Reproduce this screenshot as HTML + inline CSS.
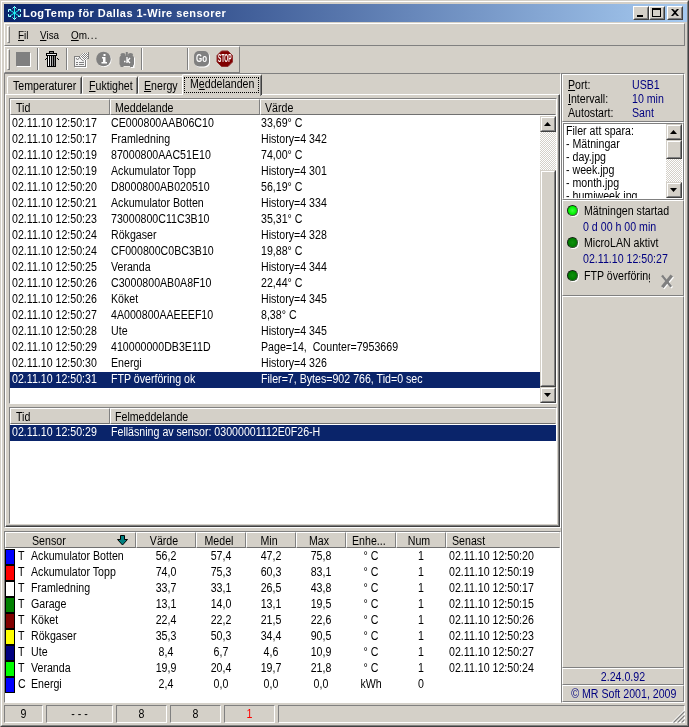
<!DOCTYPE html>
<html lang="sv"><head><meta charset="utf-8"><title>LogTemp för Dallas 1-Wire sensorer</title>
<style>
html,body{margin:0;padding:0}
body{width:689px;height:727px;overflow:hidden;background:#d4d0c8;position:relative;font-family:"Liberation Sans",Arial,sans-serif;font-size:12.5px;color:#000;line-height:16px}
div,span,i,svg{position:absolute;box-sizing:border-box}
#root{left:0;top:0;width:689px;height:727px;will-change:transform}
.t{white-space:pre;font-size:12.5px;line-height:16px;height:16px;transform:scaleX(.85);transform-origin:0 0}
.tc{text-align:center;transform-origin:50% 0}
.w{color:#fff}
.blue{color:#000080}
u{text-decoration:underline;text-underline-offset:1px;text-decoration-thickness:1px}
#frame1{left:0;top:0;width:689px;height:727px;border:1px solid;border-color:#d4d0c8 #404040 #404040 #d4d0c8}
#frame2{left:1px;top:1px;width:687px;height:725px;border:1px solid;border-color:#fff #808080 #808080 #fff}
#title{left:4px;top:4px;width:683px;height:18px;background:linear-gradient(90deg,#0a246a 0%,#a6caf0 100%)}
#title .tt{left:19px;top:3px;color:#fff;font-weight:bold;font-size:11px;line-height:13px;white-space:pre;letter-spacing:0.45px}
.tb{width:16px;height:14px;top:2px;background:#d4d0c8;border:1px solid;border-color:#fff #404040 #404040 #fff}
.tb:before{content:"";position:absolute;left:0;top:0;right:0;bottom:0;border:1px solid;border-color:#d4d0c8 #808080 #808080 #d4d0c8}
.band{border:1px solid;border-color:#fff #808080 #808080 #fff}
.grip{width:3px;border:1px solid;border-color:#fff #808080 #808080 #fff}
.menu{top:29px;white-space:pre;font-size:11px;line-height:13px;transform:scaleX(.9);transform-origin:0 0}
.sep{width:2px;border-left:1px solid #808080;border-right:1px solid #fff}
.sunk1{border:1px solid;border-color:#808080 #fff #fff #808080}
.rais1{border:1px solid;border-color:#fff #808080 #808080 #fff}
.tab{border:1px solid;border-color:#fff #404040 transparent #fff;border-radius:2px 2px 0 0;background:#d4d0c8}
.tab:after{content:"";position:absolute;right:0;top:1px;bottom:-1px;width:1px;background:#808080}
.lv{background:#fff;border:1px solid;border-color:#808080 #fff #fff #808080}
.hdr{background:#d4d0c8;border:1px solid;border-color:#fff #808080 #707070 #fff}
.selrow{background:#0a246a}
.sw{border:1px solid #000}
.sortarrow{left:117px;top:535px}
.btn{background:#d4d0c8;border:1px solid;border-color:#d4d0c8 #404040 #404040 #d4d0c8}
.btn:before{content:"";position:absolute;left:0;top:0;right:0;bottom:0;border:1px solid;border-color:#fff #808080 #808080 #fff}
.arr path{fill:#000}
.track{background-color:#fff;background-image:conic-gradient(#d4d0c8 25%,#fff 0 50%,#d4d0c8 0 75%,#fff 0);background-size:2px 2px}
.sp{height:18px;top:705px;border:1px solid;border-color:#808080 #fff #fff #808080}
.led{width:11px;height:11px;border-radius:50%}
</style></head><body><div id="root">
<div id="frame1"></div><div id="frame2"></div>
<div id="title"><svg style="left:2px;top:1px" width="16" height="16" viewBox="0 0 16 16"><g fill="none" stroke-width="1"><path d="M8.500 1.500v13M3 4.500l11 7M3 11.500l11-7" stroke="#20f0f0"/><path d="M6.500 3.500l2-2l2 2M6.500 12.500l2 2l2-2M2.500 7v-2.500h2.500M14.500 7v-2.500h-2.500M2.500 9v2.500h2.500M14.500 9v2.500h-2.500" stroke="#a0ffff"/></g></svg><span class="tt">LogTemp för Dallas 1-Wire sensorer</span>
<div class="tb" style="left:629px"><i style="left:3px;top:8px;width:6px;height:2px;background:#000"></i></div>
<div class="tb" style="left:645px"><i style="left:2px;top:1px;width:9px;height:9px;border:1px solid #000;border-top-width:2px"></i></div>
<div class="tb" style="left:663px"><svg style="left:3px;top:2px" width="8" height="7" viewBox="0 0 8 7"><path d="M0 0h2l2 2l2-2h2l-3 3.500l3 3.500h-2l-2-2l-2 2h-2l3-3.500z" fill="#000"/></svg></div>
</div>
<div class="band" style="left:4px;top:23px;width:681px;height:23px"></div>
<div class="grip" style="left:7px;top:26px;height:17px"></div>
<span class="menu" style="left:17.500px"><u>F</u>il</span><span class="menu" style="left:40px"><u>V</u>isa</span><span class="menu" style="left:70.500px"><u>O</u>m<span style="position:static;letter-spacing:1.100px">...</span></span>
<div class="band" style="left:4px;top:46px;width:236px;height:27px"></div>
<div class="grip" style="left:7px;top:49px;height:21px"></div>
<i style="left:16px;top:52px;width:14px;height:14px;background:#808080;box-shadow:1px 1px 0 #fff"></i>
<div class="sep" style="left:37px;top:48px;height:22px"></div>
<svg style="left:44px;top:50px" width="16" height="18" viewBox="0 0 16 18" shape-rendering="crispEdges"><rect x="5" y="1" width="5" height="2" fill="#000"/><rect x="6" y="2" width="3" height="1" fill="#808080"/><rect x="2" y="3" width="11" height="3" fill="#000"/><rect x="3" y="4" width="9" height="1" fill="#f0f0f0"/><rect x="3" y="6" width="9" height="11" fill="#000"/><rect x="4" y="6" width="1" height="10" fill="#fff"/><rect x="6" y="6" width="1" height="10" fill="#d8d8d8"/><rect x="8" y="6" width="1" height="10" fill="#a0a0a0"/><rect x="10" y="6" width="1" height="10" fill="#808080"/><rect x="1" y="9" width="1" height="1" fill="#000"/><rect x="2" y="8" width="1" height="1" fill="#000"/><rect x="13" y="8" width="1" height="1" fill="#000"/><rect x="14" y="9" width="1" height="1" fill="#000"/></svg>
<div class="sep" style="left:66px;top:48px;height:22px"></div>
<svg style="left:73px;top:52px" width="18" height="17" viewBox="0 0 18 17"><defs><pattern id="dth" width="2" height="2" patternUnits="userSpaceOnUse"><rect width="2" height="2" fill="#fff"/><rect width="1" height="1" fill="#808080"/><rect x="1" y="1" width="1" height="1" fill="#808080"/></pattern></defs><g shape-rendering="crispEdges"><rect x="2" y="5" width="12" height="11" fill="#fff"/><rect x="1" y="4" width="12" height="11" fill="#808080"/><rect x="2" y="5" width="10" height="9" fill="#f4f4f4"/><rect x="3" y="10" width="2" height="1" fill="#808080"/><rect x="6" y="10" width="5" height="1" fill="#808080"/><rect x="3" y="12" width="2" height="1" fill="#808080"/><rect x="6" y="12" width="5" height="1" fill="#808080"/></g><path d="M3 6l1.500 2l2-2.500" stroke="#808080" fill="none"/><path d="M6 5l4-4h5l1-1v7l-1-.500l-4 2.500l-2-3z" fill="url(#dth)"/><path d="M6 5l3 3l1.500 1M15.500 0v7" stroke="#808080" fill="none"/></svg>
<svg style="left:95px;top:51px" width="18" height="17" viewBox="0 0 18 17"><circle cx="9.300" cy="8.800" r="7.200" fill="#fff"/><circle cx="8.500" cy="8" r="7.300" fill="#808080"/><path d="M8.500 3h2v2h-2zM7 6h3.500v5h1.500v1.500h-5.500v-1.500h1.500v-3.500h-1z" fill="#fff"/></svg>
<svg style="left:118px;top:51px" width="18" height="18" viewBox="0 0 18 18"><g fill="#fff"><rect x="2.500" y="5.500" width="14.500" height="10" rx="2.500"/><rect x="13" y="15" width="3.500" height="2"/></g><g fill="#808080"><rect x="1.500" y="4.500" width="14.500" height="10.500" rx="2.500"/><ellipse cx="5" cy="3.800" rx="2.600" ry="1.800"/><ellipse cx="12.500" cy="3.800" rx="2.600" ry="1.800"/><rect x="7.800" y="1" width="2" height="4"/><rect x="2.500" y="14" width="3" height="2"/><rect x="12" y="14" width="3" height="2"/></g><path d="M9 6v6M6 10.500h1.500M9.500 10l2.500-3M10 10l2 2" stroke="#fff" stroke-width="1.300" fill="none"/></svg>
<div class="sep" style="left:141px;top:48px;height:22px"></div>
<div class="sep" style="left:187px;top:48px;height:22px"></div>
<svg style="left:193px;top:50px" width="18" height="18" viewBox="0 0 18 18"><rect x="2" y="2" width="15" height="15.500" rx="5" fill="#fff"/><rect x="1" y="1" width="15" height="15.500" rx="5" fill="#808080"/><text x="8.500" y="12" font-family="Liberation Sans,Arial,sans-serif" font-size="10" font-weight="bold" fill="#fff" text-anchor="middle" textLength="11" lengthAdjust="spacingAndGlyphs">Go</text></svg>
<svg style="left:216px;top:50px" width="18" height="18" viewBox="0 0 18 18"><path d="M5.500 1h6.500l4.500 4.500v6.500l-4.500 4.500h-6.500l-4.500-4.500v-6.500z" fill="#800000" stroke="#903030"/><text x="8.800" y="12" font-family="Liberation Sans,Arial,sans-serif" font-size="10" font-weight="bold" fill="#fff" text-anchor="middle" textLength="13.500" lengthAdjust="spacingAndGlyphs">STOP</text></svg>
<!-- left panel -->
<div class="sunk1" style="left:4px;top:73px;width:557px;height:455px"></div>
<div style="left:5px;top:94px;width:555px;height:433px;border:1px solid;border-color:#fff #404040 #404040 #fff"></div>
<i style="left:6px;top:525px;width:553px;height:1px;background:#808080"></i><i style="left:558px;top:95px;width:1px;height:431px;background:#808080"></i>
<div class="tab" style="left:7px;top:76px;width:75px;height:18px"></div><span class="t" style="left:13px;top:78px">Temperaturer</span>
<div class="tab" style="left:82px;top:76px;width:56px;height:18px"></div><span class="t" style="left:88.500px;top:78px"><u>F</u>uktighet</span>
<div class="tab" style="left:138px;top:76px;width:46px;height:18px"></div><span class="t" style="left:144px;top:78px"><u>E</u>nergy</span>
<div class="tab" style="left:182px;top:74px;width:80px;height:21px;border-bottom:none"><i style="left:1px;top:2px;width:75px;height:16px;border:1px dotted #000"></i></div><span class="t" style="left:189.500px;top:76px">M<u>e</u>ddelanden</span>
<div class="lv" style="left:9px;top:98px;width:548px;height:306px;"></div>
<div class="hdr" style="left:10px;top:99px;width:100px;height:16px;"></div>
<span class="t " style="left:16px;top:100px;">Tid</span>
<div class="hdr" style="left:110px;top:99px;width:150px;height:16px;"></div>
<span class="t " style="left:115px;top:100px;">Meddelande</span>
<div class="hdr" style="left:260px;top:99px;width:296px;height:16px;border-right-color:#d4d0c8"></div>
<span class="t " style="left:265px;top:100px;">Värde</span>
<span class="t " style="left:12px;top:115px;">02.11.10 12:50:17</span><span class="t " style="left:111px;top:115px;">CE000800AAB06C10</span><span class="t " style="left:261px;top:115px;">33,69° C</span>
<span class="t " style="left:12px;top:131px;">02.11.10 12:50:17</span><span class="t " style="left:111px;top:131px;">Framledning</span><span class="t " style="left:261px;top:131px;">History=4 342</span>
<span class="t " style="left:12px;top:147px;">02.11.10 12:50:19</span><span class="t " style="left:111px;top:147px;">87000800AAC51E10</span><span class="t " style="left:261px;top:147px;">74,00° C</span>
<span class="t " style="left:12px;top:163px;">02.11.10 12:50:19</span><span class="t " style="left:111px;top:163px;">Ackumulator Topp</span><span class="t " style="left:261px;top:163px;">History=4 301</span>
<span class="t " style="left:12px;top:179px;">02.11.10 12:50:20</span><span class="t " style="left:111px;top:179px;">D8000800AB020510</span><span class="t " style="left:261px;top:179px;">56,19° C</span>
<span class="t " style="left:12px;top:195px;">02.11.10 12:50:21</span><span class="t " style="left:111px;top:195px;">Ackumulator Botten</span><span class="t " style="left:261px;top:195px;">History=4 334</span>
<span class="t " style="left:12px;top:211px;">02.11.10 12:50:23</span><span class="t " style="left:111px;top:211px;">73000800C11C3B10</span><span class="t " style="left:261px;top:211px;">35,31° C</span>
<span class="t " style="left:12px;top:227px;">02.11.10 12:50:24</span><span class="t " style="left:111px;top:227px;">Rökgaser</span><span class="t " style="left:261px;top:227px;">History=4 328</span>
<span class="t " style="left:12px;top:243px;">02.11.10 12:50:24</span><span class="t " style="left:111px;top:243px;">CF000800C0BC3B10</span><span class="t " style="left:261px;top:243px;">19,88° C</span>
<span class="t " style="left:12px;top:259px;">02.11.10 12:50:25</span><span class="t " style="left:111px;top:259px;">Veranda</span><span class="t " style="left:261px;top:259px;">History=4 344</span>
<span class="t " style="left:12px;top:275px;">02.11.10 12:50:26</span><span class="t " style="left:111px;top:275px;">C3000800AB0A8F10</span><span class="t " style="left:261px;top:275px;">22,44° C</span>
<span class="t " style="left:12px;top:291px;">02.11.10 12:50:26</span><span class="t " style="left:111px;top:291px;">Köket</span><span class="t " style="left:261px;top:291px;">History=4 345</span>
<span class="t " style="left:12px;top:307px;">02.11.10 12:50:27</span><span class="t " style="left:111px;top:307px;">4A000800AAEEEF10</span><span class="t " style="left:261px;top:307px;">8,38° C</span>
<span class="t " style="left:12px;top:323px;">02.11.10 12:50:28</span><span class="t " style="left:111px;top:323px;">Ute</span><span class="t " style="left:261px;top:323px;">History=4 345</span>
<span class="t " style="left:12px;top:339px;">02.11.10 12:50:29</span><span class="t " style="left:111px;top:339px;">410000000DB3E11D</span><span class="t " style="left:261px;top:339px;">Page=14,  Counter=7953669</span>
<span class="t " style="left:12px;top:355px;">02.11.10 12:50:30</span><span class="t " style="left:111px;top:355px;">Energi</span><span class="t " style="left:261px;top:355px;">History=4 326</span>
<div class="selrow" style="left:10px;top:372px;width:530px;height:16px;"></div>
<span class="t w" style="left:12px;top:371px;">02.11.10 12:50:31</span><span class="t w" style="left:111px;top:371px;">FTP överföring ok</span><span class="t w" style="left:261px;top:371px;">Filer=7, Bytes=902 766, Tid=0 sec</span>
<div class="track" style="left:540px;top:116px;width:16px;height:287px;"></div>
<div class="btn" style="left:540px;top:116px;width:16px;height:16px;"><svg class="arr" width="7" height="4" viewBox="0 0 7 4" style="left:3px;top:5px"><path d="M0 4h7l-3.500-4z"/></svg></div>
<div class="btn" style="left:540px;top:170px;width:16px;height:217px;"></div>
<div class="btn" style="left:540px;top:387px;width:16px;height:16px;"><svg class="arr" width="7" height="4" viewBox="0 0 7 4" style="left:3px;top:5px"><path d="M0 0h7l-3.500 4z"/></svg></div>
<div class="lv" style="left:9px;top:407px;width:548px;height:117px;"></div>
<div class="hdr" style="left:10px;top:408px;width:100px;height:16px;"></div>
<span class="t " style="left:16px;top:409px;">Tid</span>
<div class="hdr" style="left:110px;top:408px;width:446px;height:16px;border-right-color:#d4d0c8"></div>
<span class="t " style="left:115px;top:409px;">Felmeddelande</span>
<div class="selrow" style="left:10px;top:425px;width:546px;height:16px;"></div>
<span class="t w" style="left:12px;top:424px;">02.11.10 12:50:29</span><span class="t w" style="left:111px;top:424px;">Felläsning av sensor: 03000001112E0F26-H</span>
<div class="sunk1" style="left:4px;top:531px;width:557px;height:172px;background:#fff"></div>
<div class="hdr" style="left:5px;top:532px;width:131px;height:16px;"></div>
<span class="t " style="left:32px;top:533px;">Sensor</span>
<div class="hdr" style="left:136px;top:532px;width:60px;height:16px;"></div>
<span class="t tc " style="left:134px;width:60px;top:533px;">Värde</span>
<div class="hdr" style="left:196px;top:532px;width:50px;height:16px;"></div>
<span class="t tc " style="left:194px;width:50px;top:533px;">Medel</span>
<div class="hdr" style="left:246px;top:532px;width:50px;height:16px;"></div>
<span class="t tc " style="left:244px;width:50px;top:533px;">Min</span>
<div class="hdr" style="left:296px;top:532px;width:50px;height:16px;"></div>
<span class="t tc " style="left:294px;width:50px;top:533px;">Max</span>
<div class="hdr" style="left:346px;top:532px;width:50px;height:16px;"></div>
<span class="t " style="left:352px;top:533px;">Enhe...</span>
<div class="hdr" style="left:396px;top:532px;width:50px;height:16px;"></div>
<span class="t tc " style="left:394px;width:50px;top:533px;">Num</span>
<div class="hdr" style="left:446px;top:532px;width:114px;height:16px;border-right-color:#d4d0c8"></div>
<span class="t " style="left:452px;top:533px;">Senast</span>
<svg class="sortarrow" width="11" height="11" viewBox="0 0 11 11"><path d="M3.500 0.500h4v4h3l-5 5.500l-5-5.500h3z" fill="#008080" stroke="#000" stroke-width="1"/></svg>
<div class="sw" style="left:5px;top:549px;width:10px;height:16px;background:#0000ff"></div>
<span class="t " style="left:18px;top:548px;">T</span><span class="t " style="left:31px;top:548px;">Ackumulator Botten</span><span class="t tc " style="left:136px;width:60px;top:548px;">56,2</span><span class="t tc " style="left:195.5px;width:50px;top:548px;">57,4</span><span class="t tc " style="left:245.5px;width:50px;top:548px;">47,2</span><span class="t tc " style="left:295.5px;width:50px;top:548px;">75,8</span><span class="t tc " style="left:345.5px;width:50px;top:548px;">° C</span><span class="t tc " style="left:395.5px;width:50px;top:548px;">1</span><span class="t " style="left:449px;top:548px;">02.11.10 12:50:20</span>
<div class="sw" style="left:5px;top:565px;width:10px;height:16px;background:#ff0000"></div>
<span class="t " style="left:18px;top:564px;">T</span><span class="t " style="left:31px;top:564px;">Ackumulator Topp</span><span class="t tc " style="left:136px;width:60px;top:564px;">74,0</span><span class="t tc " style="left:195.5px;width:50px;top:564px;">75,3</span><span class="t tc " style="left:245.5px;width:50px;top:564px;">60,3</span><span class="t tc " style="left:295.5px;width:50px;top:564px;">83,1</span><span class="t tc " style="left:345.5px;width:50px;top:564px;">° C</span><span class="t tc " style="left:395.5px;width:50px;top:564px;">1</span><span class="t " style="left:449px;top:564px;">02.11.10 12:50:19</span>
<div class="sw" style="left:5px;top:581px;width:10px;height:16px;background:#ffffff"></div>
<span class="t " style="left:18px;top:580px;">T</span><span class="t " style="left:31px;top:580px;">Framledning</span><span class="t tc " style="left:136px;width:60px;top:580px;">33,7</span><span class="t tc " style="left:195.5px;width:50px;top:580px;">33,1</span><span class="t tc " style="left:245.5px;width:50px;top:580px;">26,5</span><span class="t tc " style="left:295.5px;width:50px;top:580px;">43,8</span><span class="t tc " style="left:345.5px;width:50px;top:580px;">° C</span><span class="t tc " style="left:395.5px;width:50px;top:580px;">1</span><span class="t " style="left:449px;top:580px;">02.11.10 12:50:17</span>
<div class="sw" style="left:5px;top:597px;width:10px;height:16px;background:#008000"></div>
<span class="t " style="left:18px;top:596px;">T</span><span class="t " style="left:31px;top:596px;">Garage</span><span class="t tc " style="left:136px;width:60px;top:596px;">13,1</span><span class="t tc " style="left:195.5px;width:50px;top:596px;">14,0</span><span class="t tc " style="left:245.5px;width:50px;top:596px;">13,1</span><span class="t tc " style="left:295.5px;width:50px;top:596px;">19,5</span><span class="t tc " style="left:345.5px;width:50px;top:596px;">° C</span><span class="t tc " style="left:395.5px;width:50px;top:596px;">1</span><span class="t " style="left:449px;top:596px;">02.11.10 12:50:15</span>
<div class="sw" style="left:5px;top:613px;width:10px;height:16px;background:#800000"></div>
<span class="t " style="left:18px;top:612px;">T</span><span class="t " style="left:31px;top:612px;">Köket</span><span class="t tc " style="left:136px;width:60px;top:612px;">22,4</span><span class="t tc " style="left:195.5px;width:50px;top:612px;">22,2</span><span class="t tc " style="left:245.5px;width:50px;top:612px;">21,5</span><span class="t tc " style="left:295.5px;width:50px;top:612px;">22,6</span><span class="t tc " style="left:345.5px;width:50px;top:612px;">° C</span><span class="t tc " style="left:395.5px;width:50px;top:612px;">1</span><span class="t " style="left:449px;top:612px;">02.11.10 12:50:26</span>
<div class="sw" style="left:5px;top:629px;width:10px;height:16px;background:#ffff00"></div>
<span class="t " style="left:18px;top:628px;">T</span><span class="t " style="left:31px;top:628px;">Rökgaser</span><span class="t tc " style="left:136px;width:60px;top:628px;">35,3</span><span class="t tc " style="left:195.5px;width:50px;top:628px;">50,3</span><span class="t tc " style="left:245.5px;width:50px;top:628px;">34,4</span><span class="t tc " style="left:295.5px;width:50px;top:628px;">90,5</span><span class="t tc " style="left:345.5px;width:50px;top:628px;">° C</span><span class="t tc " style="left:395.5px;width:50px;top:628px;">1</span><span class="t " style="left:449px;top:628px;">02.11.10 12:50:23</span>
<div class="sw" style="left:5px;top:645px;width:10px;height:16px;background:#000080"></div>
<span class="t " style="left:18px;top:644px;">T</span><span class="t " style="left:31px;top:644px;">Ute</span><span class="t tc " style="left:136px;width:60px;top:644px;">8,4</span><span class="t tc " style="left:195.5px;width:50px;top:644px;">6,7</span><span class="t tc " style="left:245.5px;width:50px;top:644px;">4,6</span><span class="t tc " style="left:295.5px;width:50px;top:644px;">10,9</span><span class="t tc " style="left:345.5px;width:50px;top:644px;">° C</span><span class="t tc " style="left:395.5px;width:50px;top:644px;">1</span><span class="t " style="left:449px;top:644px;">02.11.10 12:50:27</span>
<div class="sw" style="left:5px;top:661px;width:10px;height:16px;background:#00ff00"></div>
<span class="t " style="left:18px;top:660px;">T</span><span class="t " style="left:31px;top:660px;">Veranda</span><span class="t tc " style="left:136px;width:60px;top:660px;">19,9</span><span class="t tc " style="left:195.5px;width:50px;top:660px;">20,4</span><span class="t tc " style="left:245.5px;width:50px;top:660px;">19,7</span><span class="t tc " style="left:295.5px;width:50px;top:660px;">21,8</span><span class="t tc " style="left:345.5px;width:50px;top:660px;">° C</span><span class="t tc " style="left:395.5px;width:50px;top:660px;">1</span><span class="t " style="left:449px;top:660px;">02.11.10 12:50:24</span>
<div class="sw" style="left:5px;top:677px;width:10px;height:16px;background:#0000ff"></div>
<span class="t " style="left:18px;top:676px;">C</span><span class="t " style="left:31px;top:676px;">Energi</span><span class="t tc " style="left:136px;width:60px;top:676px;">2,4</span><span class="t tc " style="left:195.5px;width:50px;top:676px;">0,0</span><span class="t tc " style="left:245.5px;width:50px;top:676px;">0,0</span><span class="t tc " style="left:295.5px;width:50px;top:676px;">0,0</span><span class="t tc " style="left:345.5px;width:50px;top:676px;">kWh</span><span class="t tc " style="left:395.5px;width:50px;top:676px;">0</span>
<!-- right panel -->
<div class="sunk1" style="left:561px;top:73px;width:124px;height:630px"></div>
<div class="rais1" style="left:562px;top:74px;width:122px;height:48px"></div>
<div class="rais1" style="left:562px;top:122px;width:122px;height:78px"></div>
<div class="rais1" style="left:562px;top:200px;width:122px;height:96px"></div>
<div class="rais1" style="left:562px;top:296px;width:122px;height:372px"></div>
<div class="rais1" style="left:562px;top:668px;width:122px;height:17px"></div>
<div class="rais1" style="left:562px;top:685px;width:122px;height:17px"></div>
<span class="t" style="left:568px;top:77px"><u>P</u>ort:</span><span class="t blue" style="left:632px;top:77px">USB1</span>
<span class="t" style="left:568px;top:91px"><u>I</u>ntervall:</span><span class="t blue" style="left:632px;top:91px">10 min</span>
<span class="t" style="left:568px;top:105px">Autostart:</span><span class="t blue" style="left:632px;top:105px">Sant</span>
<div class="lv" style="left:563px;top:123px;width:120px;height:76px;overflow:hidden">
<span class="t" style="left:2px;top:1px;line-height:13px;height:auto">Filer att spara:<br>- Mätningar<br>- day.jpg<br>- week.jpg<br>- month.jpg<br>- humiweek.jpg</span>
<div class="track" style="left:102px;top:0;width:16px;height:74px"></div>
<div class="btn" style="left:102px;top:0;width:16px;height:16px"><svg class="arr" style="left:3px;top:5px" width="7" height="4" viewBox="0 0 7 4"><path d="M0 4h7l-3.500-4z"/></svg></div>
<div class="btn" style="left:102px;top:16px;width:16px;height:19px"></div>
<div class="btn" style="left:102px;top:58px;width:16px;height:16px"><svg class="arr" style="left:3px;top:5px" width="7" height="4" viewBox="0 0 7 4"><path d="M0 0h7l-3.500 4z"/></svg></div>
</div>
<i class="led" style="left:567px;top:205px;background:radial-gradient(circle at 50% 50%,#40ff40,#00f000 60%,#00d000);border:1px solid;border-color:#102810 #406040 #406040 #102810;box-shadow:1px 1px 0 #fff"></i>
<span class="t" style="left:584px;top:203px">Mätningen startad</span>
<span class="t blue" style="left:582.500px;top:219px">0 d 00 h 00 min</span>
<i class="led" style="left:567px;top:237px;background:radial-gradient(circle at 50% 50%,#109010,#008000 60%,#007000);border:1px solid;border-color:#102010 #305030 #305030 #102010;box-shadow:1px 1px 0 #fff"></i>
<span class="t" style="left:584px;top:235px">MicroLAN aktivt</span>
<span class="t blue" style="left:582.500px;top:251px">02.11.10 12:50:27</span>
<i class="led" style="left:567px;top:270px;background:radial-gradient(circle at 50% 50%,#109010,#008000 60%,#007000);border:1px solid;border-color:#102010 #305030 #305030 #102010;box-shadow:1px 1px 0 #fff"></i>
<div style="left:584px;top:268px;width:66px;height:16px;overflow:hidden"><span class="t" style="left:0;top:0">FTP överföring</span></div>
<svg style="left:652px;top:266px" width="32" height="32" viewBox="0 0 32 32"><g fill="none" stroke="#fff" transform="translate(.9,.9)"><path d="M10.300 21.300L19.800 9.600" stroke-width="3.200"/><path d="M10 9.600L19.200 20.800" stroke-width="2.300"/></g><g fill="none" stroke="#808080"><path d="M10.300 21.300L19.800 9.600" stroke-width="3.200"/><path d="M10 9.600L19.200 20.800" stroke-width="2.300"/></g></svg>
<span class="t tc blue" style="left:562px;width:122px;top:669px">2.24.0.92</span>
<span class="t tc blue" style="left:562px;width:122px;top:686px">© MR Soft 2001, 2009</span>
<!-- status bar -->
<div class="sp" style="left:4px;width:39px"></div><span class="t tc" style="left:4px;width:39px;top:706px">9</span>
<div class="sp" style="left:46px;width:67px"></div><span class="t tc" style="left:46px;width:67px;top:706px">- - -</span>
<div class="sp" style="left:116px;width:51px"></div><span class="t tc" style="left:116px;width:51px;top:706px">8</span>
<div class="sp" style="left:170px;width:51px"></div><span class="t tc" style="left:170px;width:51px;top:706px">8</span>
<div class="sp" style="left:224px;width:51px"></div><span class="t tc" style="left:224px;width:51px;top:706px;color:#ff0000">1</span>
<div class="sp" style="left:278px;width:407px"></div>
<svg style="left:672px;top:710px" width="13" height="13" viewBox="0 0 13 13"><path d="M12.500 1.500L1.500 12.500M12.500 5.500L5.500 12.500M12.500 9.500L9.500 12.500" stroke="#808080" stroke-width="1.300"/><path d="M12.500 0L0 12.500M12.500 4L4 12.500M12.500 8L8 12.500" stroke="#fff" stroke-width="1"/></svg>
</div></body></html>
